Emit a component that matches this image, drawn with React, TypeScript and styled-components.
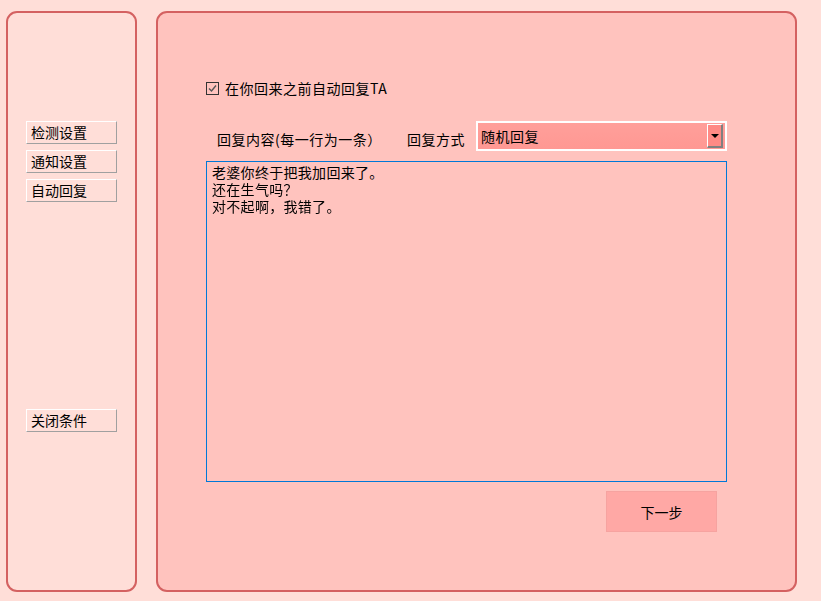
import React from "react";
import styled, { createGlobalStyle } from "styled-components";

const Global = createGlobalStyle`
  html, body { margin: 0; padding: 0; background: #FFDED8; }
  body { font-family: "Noto Sans CJK SC", "Noto Sans", sans-serif; font-size: 14px; color: #000; }
  * { box-sizing: border-box; }
`;

const Page = styled.div`
  width: 821px;
  height: 601px;
  display: flex;
  align-items: flex-start;
  gap: 19px;
  padding: 11px 0 0 6px;
  background: #FFDED8;
`;

const SidePanel = styled.div`
  width: 131px;
  height: 581px;
  border: 2px solid #D46161;
  border-radius: 11px;
  background: #FFDED8;
  display: flex;
  flex-direction: column;
  align-items: flex-start;
  gap: 6px;
  padding: 108px 0 0 18px;
`;

const NavButton = styled.button<{ $pushed?: boolean }>`
  width: 91px;
  height: 23px;
  margin-top: ${(p) => (p.$pushed ? "201px" : "0")};
  padding: 0 0 0 4px;
  background: #FFDED8;
  border-top: 1px solid #FFFFFF;
  border-left: 1px solid #FFFFFF;
  border-right: 1px solid #A0A0A0;
  border-bottom: 1px solid #A0A0A0;
  font-family: "Noto Sans CJK SC", sans-serif;
  font-size: 14px;
  line-height: 21px;
  color: #000;
  text-align: left;
  cursor: pointer;
`;

const MainPanel = styled.div`
  width: 641px;
  height: 581px;
  border: 2px solid #D46161;
  border-radius: 11px;
  background: #FFC3BE;
  display: flex;
  flex-direction: column;
  padding: 69px 0 0 48px;
`;

const CheckRow = styled.label`
  display: flex;
  align-items: center;
  gap: 6px;
  height: 13px;
  font-size: 14px;
  line-height: 13px;
  letter-spacing: 0.5px;
`;

const CheckBox = styled.span`
  width: 13px;
  height: 13px;
  border: 1px solid #333;
  display: flex;
  align-items: center;
  justify-content: center;
  background: transparent;
`;

const OptionsRow = styled.div`
  display: flex;
  align-items: center;
  margin-top: 26px;
  height: 30px;
  width: 521px;
`;

const Label = styled.span<{ $indent: number; $width?: number }>`
  padding-left: ${(p) => p.$indent}px;
  width: ${(p) => (p.$width ? `${p.$width}px` : "auto")};
  font-size: 14px;
  line-height: 16px;
  margin-top: 6px;
  white-space: nowrap;
  letter-spacing: 0.5px;
`;

const Select = styled.div`
  width: 251px;
  height: 30px;
  margin-left: auto;
  border: 2px solid #FFFFFF;
  background: linear-gradient(#FF9F9A, #FF9893);
  display: flex;
  align-items: center;
  padding: 0 1px 0 3px;
`;

const SelectValue = styled.span`
  flex: 1;
  font-size: 14px;
  letter-spacing: 0.5px;
`;

const DropButton = styled.span`
  width: 16px;
  height: 24px;
  background: #FF8A85;
  border-top: 1px solid #FFFFFF;
  border-left: 1px solid #FFFFFF;
  border-right: 2px solid #808080;
  border-bottom: 2px solid #808080;
  display: flex;
  align-items: center;
  justify-content: center;
  margin-right: 1px;
`;

const Arrow = styled.span`
  width: 0;
  height: 0;
  border-left: 4px solid transparent;
  border-right: 4px solid transparent;
  border-top: 4px solid #000;
`;

const Editor = styled.textarea`
  margin-top: 10px;
  width: 521px;
  height: 321px;
  border: 1px solid #0078D7;
  background: #FFC3BE;
  resize: none;
  outline: none;
  padding: 2px 5px;
  font-family: "Noto Sans CJK SC", sans-serif;
  font-size: 14px;
  line-height: 17px;
  letter-spacing: 0.3px;
  color: #000;
`;

const NextButton = styled.button`
  align-self: flex-start;
  margin: 9px 0 0 400px;
  width: 111px;
  height: 41px;
  background: #FFA8A5;
  border: 1px solid #F6A3A0;
  font-family: "Noto Sans CJK SC", sans-serif;
  font-size: 14px;
  color: #000;
  cursor: pointer;
`;

export default function App() {
  const text = "老婆你终于把我加回来了。\n还在生气吗？\n对不起啊，我错了。\n";
  return (
    <>
      <Global />
      <Page>
        <SidePanel>
          <NavButton>检测设置</NavButton>
          <NavButton>通知设置</NavButton>
          <NavButton>自动回复</NavButton>
          <NavButton $pushed>关闭条件</NavButton>
        </SidePanel>
        <MainPanel>
          <CheckRow>
            <CheckBox>
              <svg width="11" height="11" viewBox="0 0 11 11">
                <path d="M2 5.5 L4.5 8 L9 2.5" fill="none" stroke="#555" strokeWidth="1.4" />
              </svg>
            </CheckBox>
            在你回来之前自动回复TA
          </CheckRow>
          <OptionsRow>
            <Label $indent={11} $width={201}>回复内容(每一行为一条）</Label>
            <Label $indent={0}>回复方式</Label>
            <Select>
              <SelectValue>随机回复</SelectValue>
              <DropButton>
                <Arrow />
              </DropButton>
            </Select>
          </OptionsRow>
          <Editor defaultValue={text} autoFocus spellCheck={false} />
          <NextButton>下一步</NextButton>
        </MainPanel>
      </Page>
    </>
  );
}
